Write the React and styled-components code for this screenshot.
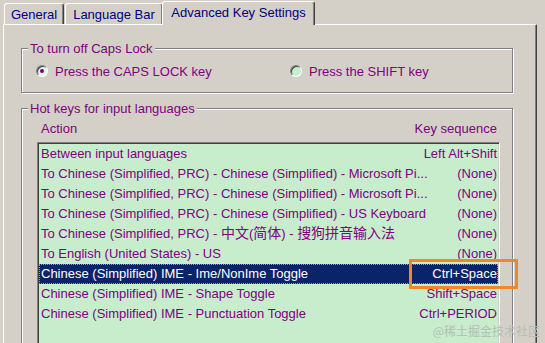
import React from 'react';
import styled, { createGlobalStyle } from 'styled-components';

const GlobalStyle = createGlobalStyle`
  html, body {
    margin: 0;
    padding: 0;
    background: #D4D0C8;
  }
  body {
    font-family: "Liberation Sans", Arial, "Noto Sans CJK SC", sans-serif;
    font-size: 13px;
  }
`;

const Screen = styled.div`
  position: relative;
  width: 545px;
  height: 343px;
  overflow: hidden;
  background: #D4D0C8;
`;

// Tabs
const TabStrip = styled.div`
  display: flex;
  align-items: flex-end;
  height: 24px;
  padding-left: 4px;
  box-sizing: border-box;
`;

const Tab = styled.div`
  box-sizing: border-box;
  width: ${props => props.$w}px;
  height: ${props => (props.$active ? 24 : 21)}px;
  margin-left: ${props => (props.$active ? -2 : 0)}px;
  margin-right: ${props => (props.$active ? 0 : 1)}px;
  margin-bottom: ${props => (props.$active ? -1 : 0)}px;
  position: relative;
  z-index: ${props => (props.$active ? 2 : 0)};
  padding-top: 3px;
  background: #D4D0C8;
  border: 1px solid;
  border-bottom: none;
  border-color: #fff #404040 transparent #fff;
  border-radius: 3px 3px 0 0;
  box-shadow: inset -1px 0 0 #808080;
  color: #000080;
  line-height: 15px;
  text-align: center;
  white-space: nowrap;
`;

// Page body
const Panel = styled.div`
  box-sizing: border-box;
  margin-left: 3px;
  width: 534px;
  height: 400px;
  padding: 16px 23px 0 17px;
  border-top: 1px solid #fff;
  border-left: 1px solid #fff;
  border-right: 1px solid #404040;
  box-shadow: inset -1px 0 0 #808080;
`;

const GroupBox = styled.fieldset`
  margin: ${props => props.$mt || 0}px 0 0 0;
  padding: 0 6px ${props => props.$pb || 0}px 6px;
  min-width: 0;
  border: 1px solid #808080;
  box-shadow: 1px 1px 0 #fff, inset 1px 1px 0 #fff;
  legend {
    padding: 0 2px;
    color: #800080;
    line-height: 15px;
    background: #D4D0C8;
  }
`;

const RadioRow = styled.div`
  display: grid;
  grid-template-columns: 254px 1fr;
  height: 20px;
  margin-top: 5px;
  padding-left: 8px;
`;

const RadioItem = styled.label`
  display: flex;
  align-items: center;
  gap: 7px;
  color: #800080;
  white-space: nowrap;
`;

const RadioDot = styled.span`
  position: relative;
  box-sizing: border-box;
  width: 12px;
  height: 12px;
  border-radius: 50%;
  border: 1px solid;
  border-color: #808080 #fff #fff #808080;
  box-shadow: inset 1px 1px 0 #404040;
  background: ${props => (props.$checked ? '#E4F5E6' : '#C7EDCC')};
  &::after {
    content: '';
    display: ${props => (props.$checked ? 'block' : 'none')};
    position: absolute;
    left: 3px;
    top: 3px;
    width: 4px;
    height: 4px;
    border-radius: 50%;
    background: #800080;
  }
`;

const HeaderRow = styled.div`
  display: flex;
  justify-content: space-between;
  margin-top: 5px;
  padding: 0 9px 0 13px;
  line-height: 15px;
  color: #800080;
`;

const HotkeyList = styled.div`
  margin: 6px 6px 0 9px;
  height: 220px;
  padding: 1px;
  border: 1px solid;
  border-color: #808080 #fff #fff #808080;
  box-shadow: inset 1px 1px 0 #404040, inset -1px -1px 0 #D4D0C8;
  background: #C7EDCC;
`;

const Row = styled.div`
  display: flex;
  height: 20px;
  line-height: 20px;
  padding: 0 1px 0 2px;
  white-space: nowrap;
  color: ${props => (props.$selected ? '#fff' : '#800080')};
  background: ${props => (props.$selected ? '#0A246A' : 'transparent')};
  outline: ${props => (props.$selected ? '1px dotted #C080D0' : 'none')};
  outline-offset: -1px;
`;

const ActionCell = styled.span`
  flex: 1;
  min-width: 0;
`;

const KeyCell = styled.span`
  flex: none;
  padding-left: 8px;
  text-align: right;
`;

// CJK run: top-aligned box so its taller font doesn't shift the row baseline
const Cjk = styled.span`
  display: inline-block;
  vertical-align: top;
  height: 20px;
  line-height: 17px;
  font-family: "Noto Sans CJK SC", sans-serif;
  font-size: 14px;
`;

// Overlays
const Callout = styled.div`
  position: absolute;
  left: 409px;
  top: 259px;
  width: 109px;
  height: 30px;
  box-sizing: border-box;
  border: 3px solid #F4862A;
`;

const Watermark = styled.div`
  position: absolute;
  right: 5px;
  bottom: 4px;
  font-family: "Noto Sans CJK SC", sans-serif;
  font-size: 12px;
  color: #B4BDB5;
`;

const rows = [
  { action: 'Between input languages', key: 'Left Alt+Shift' },
  { action: 'To Chinese (Simplified, PRC) - Chinese (Simplified) - Microsoft Pi...', key: '(None)' },
  { action: 'To Chinese (Simplified, PRC) - Chinese (Simplified) - Microsoft Pi...', key: '(None)' },
  { action: 'To Chinese (Simplified, PRC) - Chinese (Simplified) - US Keyboard', key: '(None)' },
  {
    action: (
      <>
        To Chinese (Simplified, PRC) - <Cjk>中文</Cjk>(<Cjk>简体</Cjk>) - <Cjk>搜狗拼音输入法</Cjk>
      </>
    ),
    key: '(None)',
  },
  { action: 'To English (United States) - US', key: '(None)' },
  { action: 'Chinese (Simplified) IME - Ime/NonIme Toggle', key: 'Ctrl+Space', selected: true },
  { action: 'Chinese (Simplified) IME - Shape Toggle', key: 'Shift+Space' },
  { action: 'Chinese (Simplified) IME - Punctuation Toggle', key: 'Ctrl+PERIOD' },
];

export default function App() {
  return (
    <Screen>
      <GlobalStyle />
      <TabStrip>
        <Tab $w={60}>General</Tab>
        <Tab $w={98}>Language Bar</Tab>
        <Tab $w={153} $active>Advanced Key Settings</Tab>
      </TabStrip>
      <Panel>
        <GroupBox $pb={11}>
          <legend>To turn off Caps Lock</legend>
          <RadioRow>
            <RadioItem>
              <RadioDot $checked />
              Press the CAPS LOCK key
            </RadioItem>
            <RadioItem>
              <RadioDot />
              Press the SHIFT key
            </RadioItem>
          </RadioRow>
        </GroupBox>
        <GroupBox $mt={8} $pb={0}>
          <legend>Hot keys for input languages</legend>
          <HeaderRow>
            <span>Action</span>
            <span>Key sequence</span>
          </HeaderRow>
          <HotkeyList>
            {rows.map((row, i) => (
              <Row key={i} $selected={row.selected}>
                <ActionCell>{row.action}</ActionCell>
                <KeyCell>{row.key}</KeyCell>
              </Row>
            ))}
          </HotkeyList>
        </GroupBox>
      </Panel>
      <Callout />
      <Watermark>@稀土掘金技术社区</Watermark>
    </Screen>
  );
}
